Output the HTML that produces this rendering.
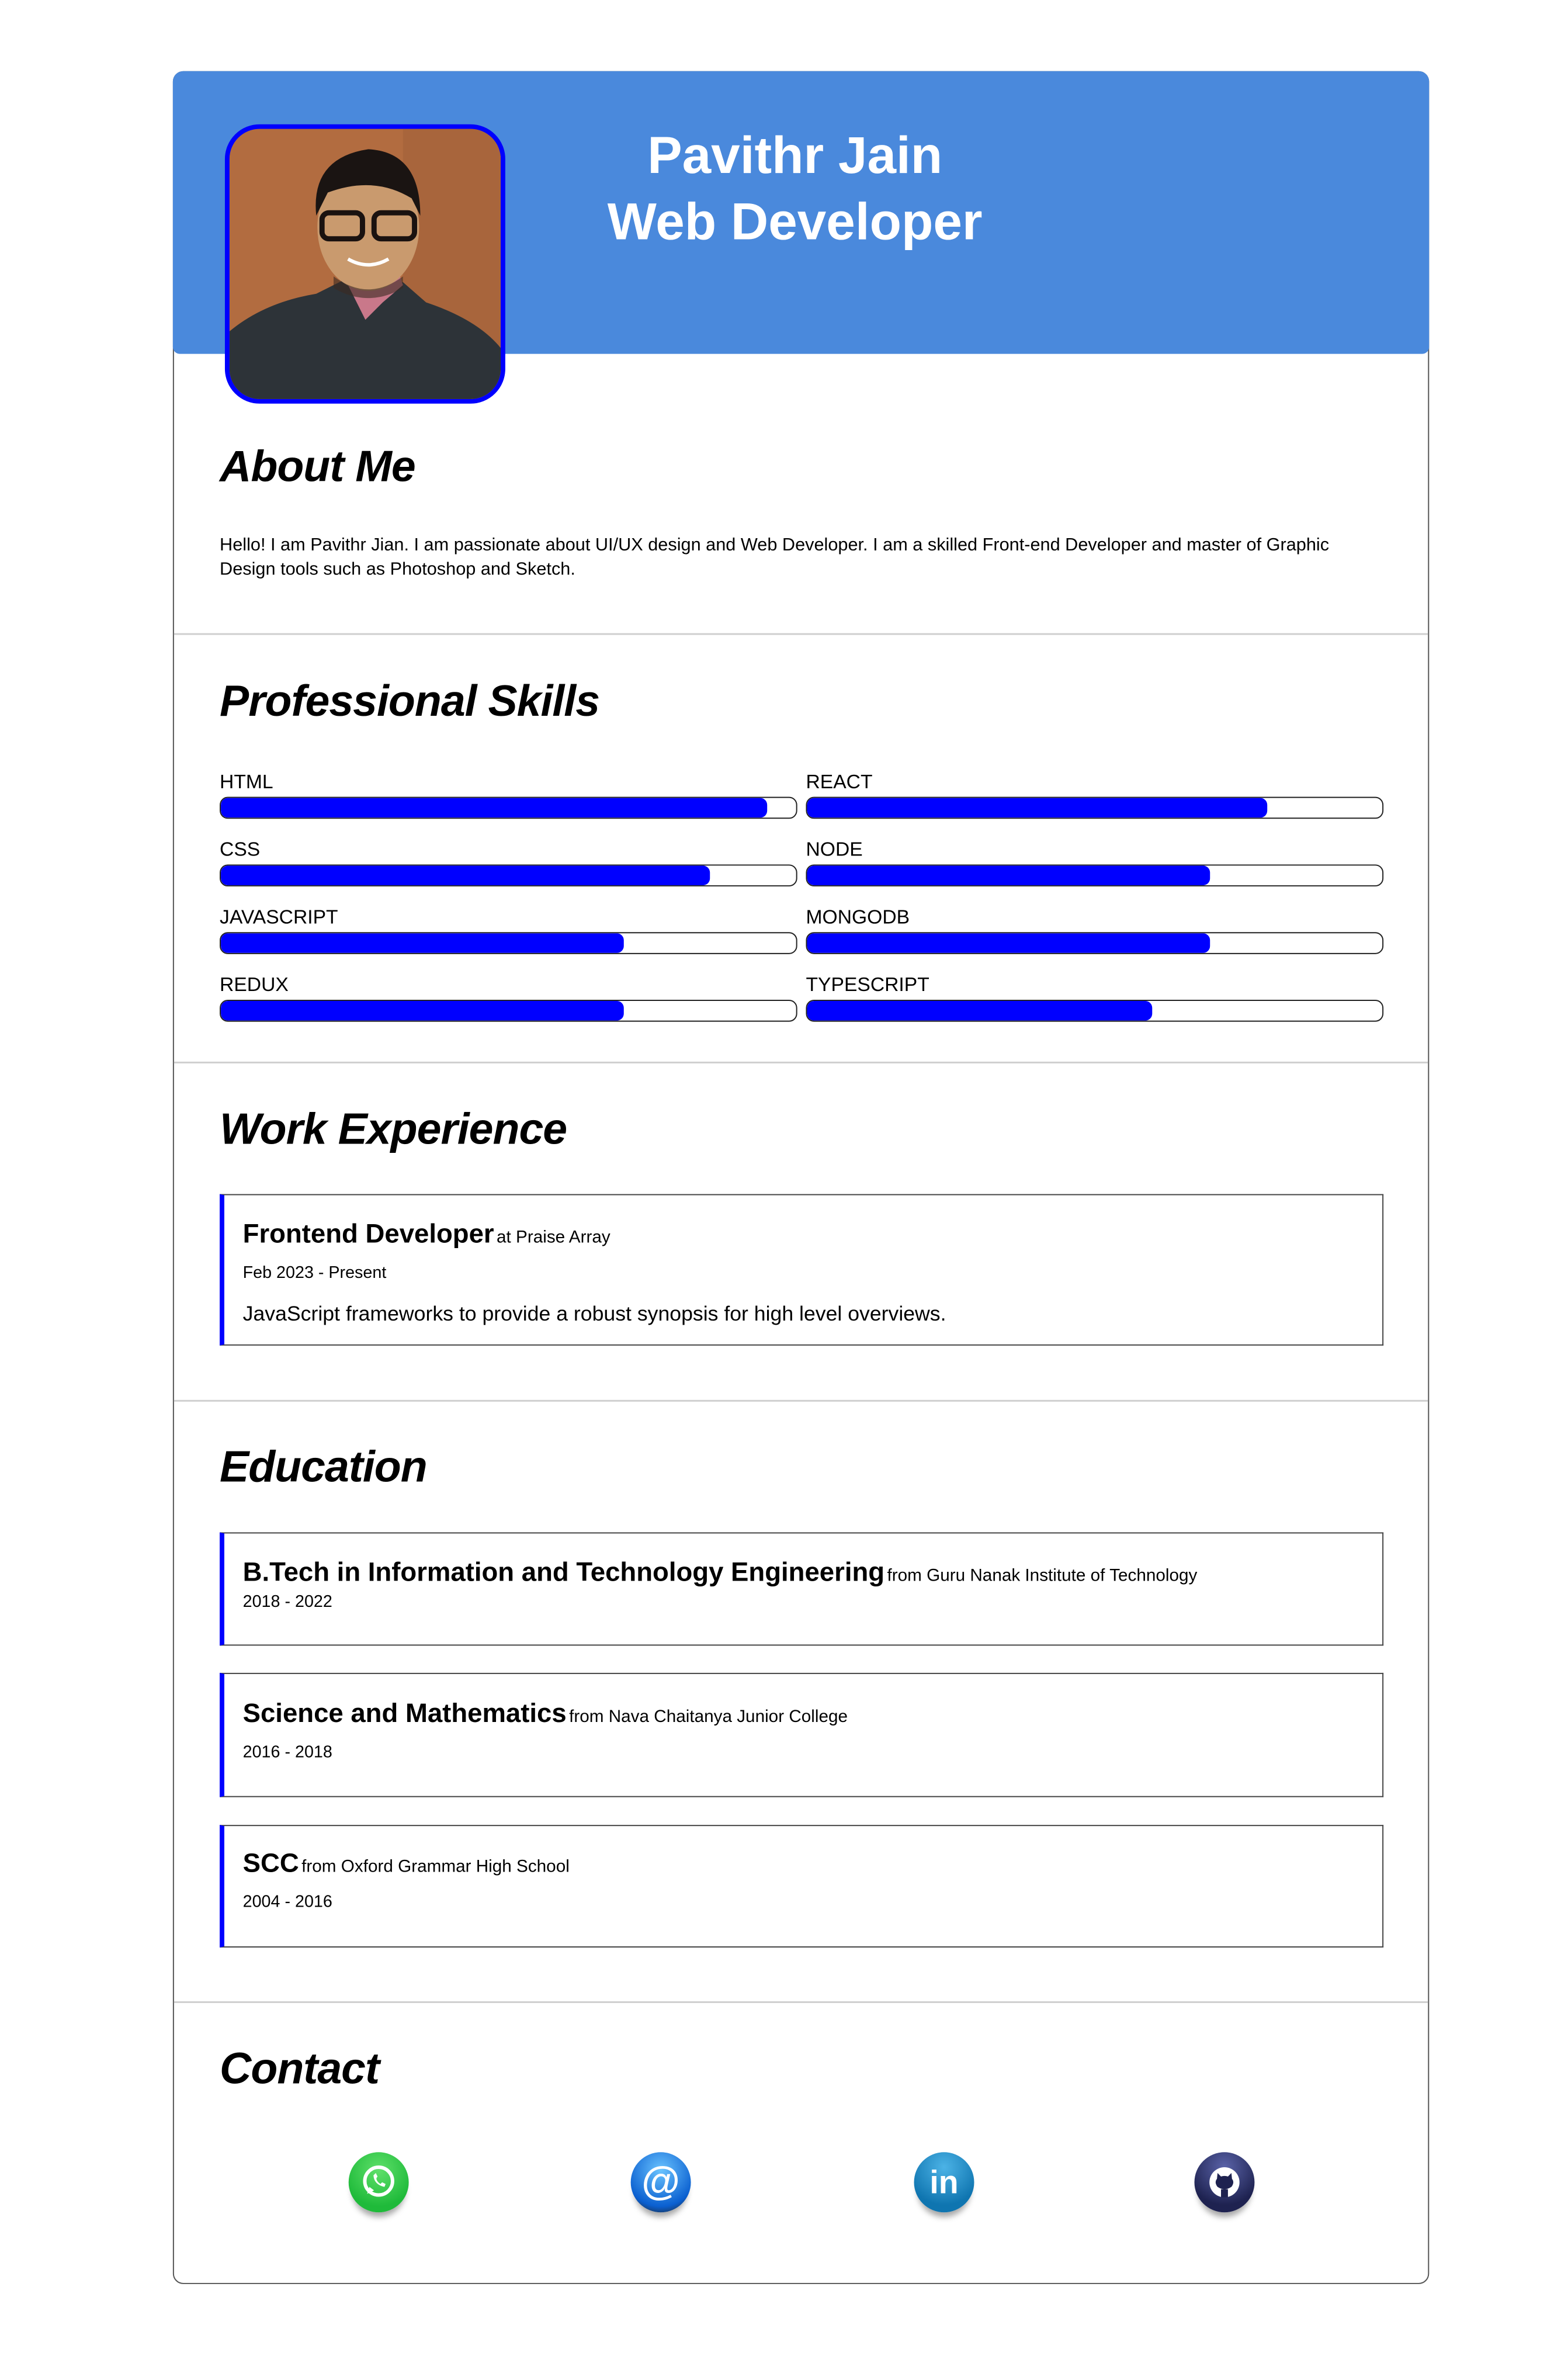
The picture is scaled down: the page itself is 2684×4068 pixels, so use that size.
<!DOCTYPE html>
<html><head><meta charset="utf-8"><style>
*{margin:0;padding:0;box-sizing:border-box}
body{width:2684px;height:4068px;background:#fff;font-family:"Liberation Sans",sans-serif;color:#000;position:relative;overflow:hidden}
#w{position:absolute;left:0;top:0;width:2712px;height:4110px;transform:scale(0.9896);transform-origin:0 0}
.a{position:absolute;white-space:nowrap}
.card{position:absolute;left:299px;top:123px;width:2173px;height:3827px;border:2px solid #555;border-radius:18px;overflow:hidden;background:#fff}
.hdr{position:absolute;left:299px;top:123px;width:2173px;height:489px;background:#4a89dc;border-radius:18px 18px 12px 12px}
.h2{font-weight:bold;font-style:italic;font-size:76px;line-height:90px;letter-spacing:-1px}
.hr{position:absolute;left:301px;width:2169px;height:3px;background:#cfcfcf}
.lbl{font-size:34px;line-height:40px}
.bar{position:absolute;width:999px;height:38px;border:2px solid #222;border-radius:14px;overflow:hidden;background:#fff}
.bar i{display:block;height:100%;background:#0000ff;border-radius:12px}
.box{position:absolute;left:380px;width:2013px;border:2px solid #444;border-left:8px solid #0000ff}
.t{font-weight:bold;font-size:46px}
.s{font-size:30px;font-weight:normal}
.d{font-size:29px}
.ic{position:absolute;width:104px;height:104px;border-radius:50%;box-shadow:0 14px 10px -6px rgba(0,0,0,.35)}
</style></head><body><div id="w">
<div class="card"></div>
<div class="hdr"></div>
<div class="a" style="left:389px;top:215px;width:485px;height:483px;border:8px solid #0000ff;border-radius:60px;overflow:hidden;background:#b06a3d">
<svg width="470" height="470" viewBox="0 0 470 470">
<rect width="470" height="470" fill="#b26c40"/>
<rect x="300" width="170" height="470" fill="#a8653c"/>
<path d="M0 350 Q60 300 150 285 L200 260 L300 265 L340 300 Q430 330 470 380 L470 470 L0 470Z" fill="#2d3338"/>
<path d="M205 270 L235 330 L265 300 L300 270 L290 240 L220 240Z" fill="#c9788a"/>
<ellipse cx="240" cy="170" rx="88" ry="110" fill="#c99a6e"/>
<path d="M150 150 Q140 50 240 35 Q330 40 330 150 L315 120 Q250 80 170 110Z" fill="#1a1412"/>
<rect x="160" y="145" width="70" height="45" rx="12" fill="none" stroke="#1a1210" stroke-width="9"/>
<rect x="250" y="145" width="70" height="45" rx="12" fill="none" stroke="#1a1210" stroke-width="9"/>
<path d="M205 225 Q240 245 275 225" stroke="#fff" stroke-width="6" fill="none"/>
<path d="M180 255 Q240 300 300 255 L300 275 Q240 310 180 275Z" fill="#3a2a22" opacity=".6"/>
</svg></div>
<div class="a" style="left:900px;top:212px;width:950px;text-align:center;color:#fff;font-weight:bold;font-size:90px;line-height:115px">Pavithr Jain<br>Web Developer</div>

<div class="a h2" style="left:380px;top:762px">About Me</div>
<div class="a" style="left:380px;top:921px;font-size:31px;line-height:42px">Hello! I am Pavithr Jian. I am passionate about UI/UX design and Web Developer. I am a skilled Front-end Developer and master of Graphic<br>Design tools such as Photoshop and Sketch.</div>
<div class="hr" style="top:1095px"></div>

<div class="a h2" style="left:380px;top:1168px">Professional Skills</div>
<div class="a lbl" style="left:380px;top:1332px">HTML</div><div class="bar" style="left:380px;top:1378px"><i style="width:95%"></i></div>
<div class="a lbl" style="left:1394px;top:1332px">REACT</div><div class="bar" style="left:1394px;top:1378px"><i style="width:80%"></i></div>
<div class="a lbl" style="left:380px;top:1449px">CSS</div><div class="bar" style="left:380px;top:1495px"><i style="width:85%"></i></div>
<div class="a lbl" style="left:1394px;top:1449px">NODE</div><div class="bar" style="left:1394px;top:1495px"><i style="width:70%"></i></div>
<div class="a lbl" style="left:380px;top:1566px">JAVASCRIPT</div><div class="bar" style="left:380px;top:1612px"><i style="width:70%"></i></div>
<div class="a lbl" style="left:1394px;top:1566px">MONGODB</div><div class="bar" style="left:1394px;top:1612px"><i style="width:70%"></i></div>
<div class="a lbl" style="left:380px;top:1683px">REDUX</div><div class="bar" style="left:380px;top:1729px"><i style="width:70%"></i></div>
<div class="a lbl" style="left:1394px;top:1683px">TYPESCRIPT</div><div class="bar" style="left:1394px;top:1729px"><i style="width:60%"></i></div>
<div class="hr" style="top:1836px"></div>

<div class="a h2" style="left:380px;top:1908px">Work Experience</div>
<div class="box" style="top:2065px;height:262px"></div>
<div class="a" style="left:420px;top:2105px;line-height:56px"><span class="t">Frontend Developer</span> <span class="s">at Praise Array</span></div>
<div class="a d" style="left:420px;top:2183px;line-height:36px">Feb 2023 - Present</div>
<div class="a" style="left:420px;top:2250px;font-size:36px;line-height:44px">JavaScript frameworks to provide a robust synopsis for high level overviews.</div>
<div class="hr" style="top:2421px"></div>

<div class="a h2" style="left:380px;top:2492px">Education</div>
<div class="box" style="top:2650px;height:196px"></div>
<div class="a" style="left:420px;top:2690px;line-height:56px"><span class="t">B.Tech in Information and Technology Engineering</span> <span class="s">from Guru Nanak Institute of Technology</span></div>
<div class="a d" style="left:420px;top:2752px;line-height:36px">2018 - 2022</div>
<div class="box" style="top:2893px;height:215px"></div>
<div class="a" style="left:420px;top:2934px;line-height:56px"><span class="t">Science and Mathematics</span> <span class="s">from Nava Chaitanya Junior College</span></div>
<div class="a d" style="left:420px;top:3012px;line-height:36px">2016 - 2018</div>
<div class="box" style="top:3156px;height:212px"></div>
<div class="a" style="left:420px;top:3193px;line-height:56px"><span class="t">SCC</span> <span class="s">from Oxford Grammar High School</span></div>
<div class="a d" style="left:420px;top:3271px;line-height:36px">2004 - 2016</div>
<div class="hr" style="top:3461px"></div>

<div class="a h2" style="left:380px;top:3533px">Contact</div>
<div class="ic" style="left:603px;top:3722px;background:radial-gradient(circle at 50% 30%,#5fe06a,#1fba3a 70%)"><svg width="104" height="104" viewBox="0 0 104 104"><circle cx="52" cy="50" r="24" fill="none" stroke="#fff" stroke-width="6"/><path d="M32 72 L36 60 L44 66Z" fill="#fff"/><path d="M43 40 Q44 56 62 60 L64 55 L58 52 L55 55 Q48 50 48 45 L50 42 L47 36Z" fill="#fff"/></svg></div>
<div class="ic" style="left:1091px;top:3722px;background:radial-gradient(circle at 50% 30%,#6ac4ff,#0a5fd0 70%,#222 96%)"><div style="color:#fff;font-size:68px;font-weight:bold;text-align:center;line-height:100px">@</div></div>
<div class="ic" style="left:1581px;top:3722px;background:radial-gradient(circle at 50% 25%,#4cb3e6,#0f75b0 70%)"><div style="color:#fff;font-size:56px;font-weight:bold;text-align:center;line-height:104px">in</div></div>
<div class="ic" style="left:2066px;top:3722px;background:radial-gradient(circle at 50% 25%,#5a63a8,#1e2250 70%)"><svg width="104" height="104" viewBox="0 0 104 104"><circle cx="52" cy="52" r="26" fill="#fff"/><path d="M40 36 L46 42 Q52 40 58 42 L64 36 L65 46 Q70 52 64 60 Q58 64 52 64 Q46 64 40 60 Q34 52 39 46Z M46 64 L46 78 L58 78 L58 64Z" fill="#1e2250"/></svg></div>
</div></body></html>
